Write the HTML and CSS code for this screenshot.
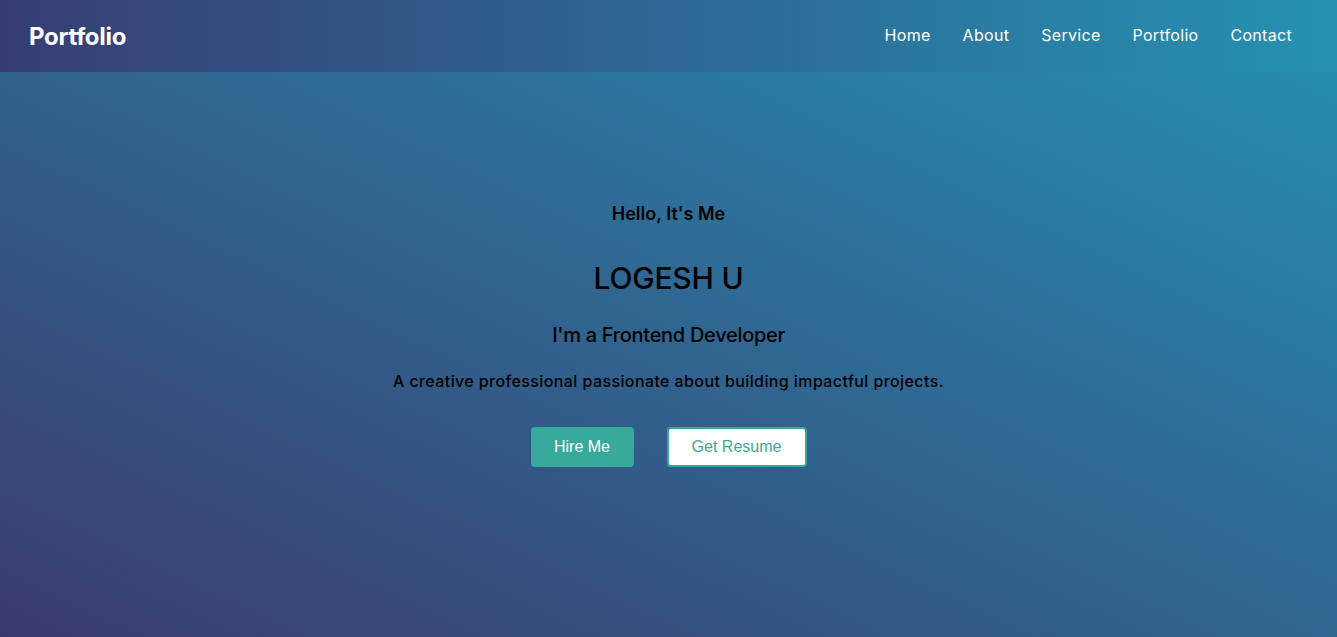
FILE: index.html
```html
<!DOCTYPE html>
<html lang="en">
<head>
<meta charset="utf-8">
<title>Portfolio</title>
<link rel="stylesheet" href="styles.css">
</head>
<body>
<div class="page">
  <header class="header">
    <a class="logo" href="#">Portfolio</a>
    <nav class="nav">
      <a href="#">Home</a>
      <a href="#">About</a>
      <a href="#">Service</a>
      <a href="#">Portfolio</a>
      <a href="#">Contact</a>
    </nav>
  </header>
  <main class="hero">
    <h3 class="hello">Hello, It's Me</h3>
    <h1 class="name">LOGESH U</h1>
    <h3 class="role">I'm a Frontend Developer</h3>
    <p class="desc">A creative professional passionate about building impactful projects.</p>
    <div class="actions">
      <a class="btn btn-fill" href="#">Hire Me</a>
      <a class="btn btn-outline" href="#">Get Resume</a>
    </div>
  </main>
</div>
</body>
</html>
```
FILE: styles.css
```css
* { box-sizing: border-box; margin: 0; padding: 0; }
html, body { height: 100%; }
body {
  font-family: "Inter", "Open Sans", sans-serif;
  background: linear-gradient(to top right, #3a3a6e 0%, #2592b3 100%);
  overflow: hidden;
}
.page { height: 637px; display: flex; flex-direction: column; }
.header {
  height: 72px;
  display: flex;
  align-items: center;
  justify-content: space-between;
  padding: 0 45px 0 29px;
  background: linear-gradient(to right, #363d74 0%, #2592b3 100%);
}
a { text-decoration: none; }
.logo {
  color: #fff;
  font-size: 24px;
  font-weight: 700;
  letter-spacing: -0.3px;
}
.nav { display: flex; gap: 32px; }
.nav a {
  color: #fff;
  font-size: 16px;
  font-weight: 400;
  letter-spacing: 0.3px;
  line-height: 20px;
  padding-bottom: 2px;
}
.hero {
  display: flex;
  flex-direction: column;
  align-items: center;
  padding-top: 128px;
  color: #000;
  text-align: center;
}
.hello { font-size: 18px; line-height: 27px; font-weight: 600; }
.name { font-size: 30px; line-height: 54px; font-weight: 500; margin-top: 24px; letter-spacing: -0.2px; }
.role { font-size: 20px; line-height: 30px; font-weight: 500; margin-top: 15px; letter-spacing: -0.3px; }
.desc { font-size: 16px; line-height: 24px; font-weight: 500; margin-top: 19px; letter-spacing: 0.4px; }
.actions { display: flex; gap: 33px; margin-top: 34px; }
.btn {
  font-family: "Liberation Sans", Arial, sans-serif;
  font-size: 16px;
  height: 40px;
  display: flex;
  align-items: center;
  justify-content: center;
  border-radius: 4px;
}
.btn-fill { width: 103px; background: #37aa9b; color: #fff; }
.btn-outline { width: 140px; background: #fff; color: #37aa9b; border: 2px solid #37aa9b; }
```
